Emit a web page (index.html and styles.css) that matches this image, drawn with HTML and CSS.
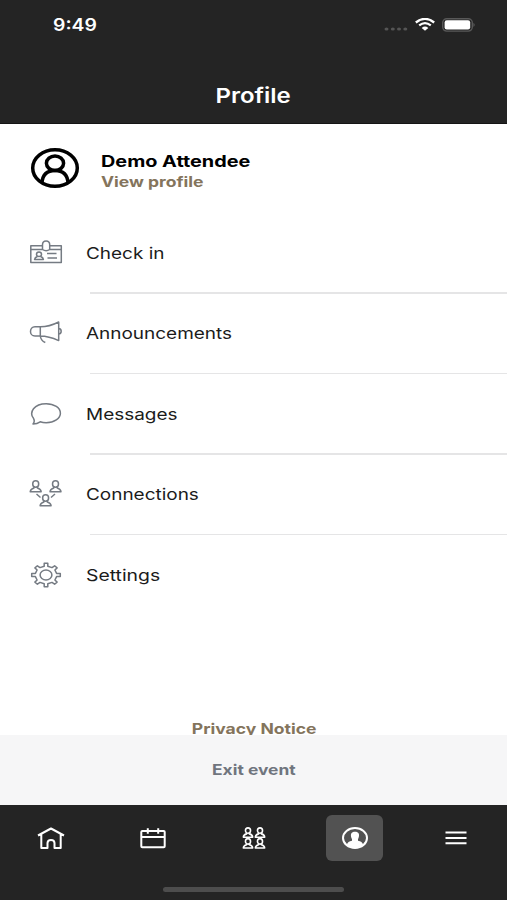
FILE: index.html
```html
<!DOCTYPE html>
<html lang="en">
<head>
<meta charset="utf-8">
<title>Profile</title>
<link rel="stylesheet" href="styles.css">
</head>
<body>
<svg width="0" height="0" class="defs" aria-hidden="true">
  <symbol id="person" viewBox="0 0 14 13" overflow="visible">
    <ellipse cx="7" cy="4" rx="3" ry="3.2"/>
    <path d="M5.3 6.700v1.200C2.800 8.500 1.700 9.200 1.500 11.800h11C12.300 9.200 11.200 8.500 8.700 7.900V6.700"/>
  </symbol>
</svg>
<div class="app">
  <header class="header">
    <div class="status">
      <span class="wide time">9:49</span>
      <div class="signals">
        <svg class="dots" width="24" height="4" viewBox="0 0 24 4"><g fill="#555"><ellipse cx="2.500" cy="2" rx="2" ry="1.600"/><ellipse cx="8.800" cy="2" rx="2" ry="1.600"/><ellipse cx="15" cy="2" rx="2" ry="1.600"/><ellipse cx="21.300" cy="2" rx="2" ry="1.600"/></g></svg>
        <svg class="wifi" width="20" height="13" viewBox="0 0 20 13" fill="none" stroke="#fff"><path d="M.8 4.500Q10-2.700 19.200 4.500" stroke-width="2.300"/><path d="M4.200 7.400Q10 2.900 15.800 7.400" stroke-width="2.200"/><path d="M6.700 9.900Q10 7 13.300 9.900L10 12.700z" fill="#fff" stroke="none"/></svg>
        <svg class="battery" width="34" height="14" viewBox="0 0 34 14"><rect x=".7" y=".7" width="29.600" height="12.400" rx="4" fill="none" stroke="#585858" stroke-width="1.400"/><rect x="2.600" y="2.300" width="25.600" height="9.200" rx="2.200" fill="#fff"/><path d="M31.500 4.800q2.200 2.100 0 4.200z" fill="#626262"/></svg>
      </div>
    </div>
    <h1><span class="wide title">Profile</span></h1>
  </header>

  <main class="content">
    <section class="user">
      <svg class="avatar" width="50" height="42" viewBox="0 0 50 42" fill="none" stroke="#000" stroke-width="3.500"><ellipse cx="25" cy="21" rx="22.300" ry="18.300"/><ellipse cx="25" cy="16.200" rx="8.600" ry="7.200"/><path d="M12 36c.5-8 5-12.500 13-12.500S37.500 28 38 36"/></svg>
      <div class="user-text">
        <span class="wide name">Demo Attendee</span>
        <span class="wide view">View profile</span>
      </div>
    </section>

    <nav class="menu">
      <a class="row"><svg class="icon" width="34" height="28" viewBox="0 0 34 28"><path d="M13.500 6.700H1.800v16.800h30.500V6.700H20.700M1.800 10.400h11.700M20.700 10.400h11.600"/><path d="M13.500 10.500V5.800c0-5 7.200-5 7.200 0v4.700q-3.600 2.400-7.200 0z"/><ellipse cx="10" cy="15.300" rx="2.500" ry="2.300"/><path d="M8.500 17.500c-2 .6-2.700 1.200-2.900 2.900h8.800c-.2-1.700-.9-2.300-2.900-2.900M18 14.600h9.500M18.500 18.900h9.500"/></svg><span class="wide label checkin">Check in</span></a>
      <a class="row"><svg class="icon" width="34" height="28" viewBox="0 0 34 28"><path d="M11.300 7.800H6C0 7.800 0 17 6 17h5.300zM11.300 7.800C18 7.800 24 5.900 29.700 3v18.600C24 19 18 17 11.300 17M29.700 9.400c3.300.3 3.300 5.200 0 5.600M11.300 17c.3 3 1.800 5.200 5 6.500"/></svg><span class="wide label announcements">Announcements</span></a>
      <a class="row"><svg class="icon" width="34" height="28" viewBox="0 0 34 28"><path d="M4.500 18.300C-.2 12.500 5 3.700 17.200 3.700c8 0 14.200 4.200 14.200 9.500s-6.200 9.500-14.200 9.500c-2.500 0-4.500-.4-6-.9-2.200 1.500-4.400 2.100-7.200 2.200 1.600-1.800 1.800-3.300.5-5.700z"/></svg><span class="wide label messages">Messages</span></a>
      <a class="row"><svg class="icon" width="34" height="28" viewBox="0 0 34 28"><use href="#person" x="-.3" y="0" width="14" height="13"/><use href="#person" x="19.500" y="0" width="14" height="13"/><use href="#person" x="9.600" y="14" width="14" height="13"/><path d="M7.500 14l4 3.500M26 14l-4 3.500"/></svg><span class="wide label connections">Connections</span></a>
      <a class="row"><svg class="icon" width="34" height="28" viewBox="0 0 34 28"><ellipse cx="17" cy="14" rx="5.900" ry="5"/><path d="M15.200 2.300h3.600v2.900l4.200 1.400 2.600-1.800 2.500 2.100-2.200 2.100 1.700 3.400h3.700v3.200h-3.700l-1.700 3.400 2.200 2.100-2.500 2.100-2.600-1.800-4.200 1.400v2.900h-3.600v-2.900L11 21.400l-2.600 1.800-2.500-2.100L8.100 19l-1.700-3.400H2.700v-3.200h3.700L8.100 9 5.900 6.900l2.500-2.100L11 6.600l4.200-1.400z"/></svg><span class="wide label settings">Settings</span></a>
    </nav>
    <div class="privacy"><span class="wide privacy-text">Privacy Notice</span></div>
  </main>

  <div class="exit"><span class="wide exit-text">Exit event</span></div>

  <footer class="tabs">
    <div class="tab-row">
      <a class="tab"><svg width="30" height="24" viewBox="0 0 30 24"><path d="M2 9.500L15 2.500l13 7M5.300 8.500v13.600h6.200v-5c0-4.300 7-4.300 7 0v5h6.200V8.500"/></svg></a>
      <a class="tab calendar"><svg width="30" height="24" viewBox="0 0 30 24"><rect x="3.300" y="5" width="23.400" height="16.300" rx="1"/><path d="M3.300 11h23.400M9.800 2.200v5.500M20.200 2.200v5.500"/></svg></a>
      <a class="tab people"><svg width="30" height="24" viewBox="0 0 30 24"><use href="#person" x="2.500" y="1.200" width="13" height="11"/><use href="#person" x="14.500" y="1.200" width="13" height="11"/><use href="#person" x="2.500" y="12" width="13" height="11"/><use href="#person" x="14.500" y="12" width="13" height="11"/></svg></a>
      <a class="tab active"><svg width="30" height="24" viewBox="0 0 30 24"><ellipse cx="15" cy="12" rx="12" ry="10"/><path d="M6.800 18.500c.7-2.200 2.300-3 5.200-3.800v-1.500c-2.400-5-.5-7.400 3-7.400s5.400 2.400 3 7.400v1.500c2.900.8 4.500 1.600 5.200 3.800-4.500 4-12 4-16.400 0z" fill="#fff" stroke="none"/></svg></a>
      <a class="tab"><svg width="30" height="24" viewBox="0 0 30 24"><path d="M4.500 6.500h21M4.500 11.900h21M4.500 17.300h21"/></svg></a>
    </div>
    <div class="home-bar"></div>
  </footer>
</div>
</body>
</html>
```

FILE: styles.css
```css
* { box-sizing: border-box; }
body { margin: 0; font-family: Inter, "Liberation Sans", sans-serif; background: #fff; }
.defs { display: block; position: absolute; }
.app { width: 507px; height: 900px; display: flex; flex-direction: column; overflow: hidden; }

/* Glyphs are stretched horizontally */
.wide { display: inline-block; white-space: nowrap; transform: scaleX(1.2); transform-origin: left center; }

.header { height: 124px; background: #242424; color: #fff; border-bottom: 1px solid #151515; flex: none; }
.status { height: 49px; padding: 0 31px 0 53px; display: flex; align-items: center; justify-content: space-between; }
.time { font-size: 17px; font-weight: 600; line-height: 20px; transform: scaleX(1.14); }
.signals { display: flex; align-items: center; }
.dots { margin: 8px 7px 0 0; }
.wifi { margin-right: 7px; }
h1 { margin: 0; height: 94px; line-height: 94px; text-align: center; font-size: 20.500px; font-weight: 600; }
.title { transform: scaleX(1.17); transform-origin: center; }

.content { height: 611px; flex: none; overflow: hidden; }
.user { height: 88.400px; padding-left: 30px; display: flex; align-items: center; }
.avatar { margin-right: 20.500px; }
.user-text { display: flex; flex-direction: column; align-items: flex-start; padding-top: 6px; }
.name { font-size: 16px; font-weight: 700; line-height: 20px; color: #000; transform: scaleX(1.24); }
.view { font-size: 14px; font-weight: 700; line-height: 21px; color: #84745c; transform: scaleX(1.25); }

.row { height: 80.500px; display: grid; grid-template-columns: 57.200px 1fr; align-items: center; margin-left: 29px; position: relative; }
.row:not(:last-child)::after { content: ""; position: absolute; left: 60.500px; right: 0; bottom: -1px; height: 1.500px; background: #e5e5e6; }
.icon { fill: none; stroke: #757b83; stroke-width: 1.500; stroke-linejoin: round; }
.label { font-size: 16px; line-height: 24px; color: #1b1b1b; justify-self: start; transform: scaleX(1.185); }
.settings { transform: scaleX(1.21); }

.privacy { margin-top: 104px; text-align: center; font-size: 14.500px; line-height: 20px; font-weight: 700; color: #84745c; }
.privacy-text, .exit-text { transform-origin: center; }
.privacy-text { transform: translateX(.6px) scaleX(1.21); }
.exit { height: 70px; flex: none; background: #f6f6f7; text-align: center; line-height: 70px; font-size: 14.500px; font-weight: 700; color: #70757e; }

.tabs { flex: 1; background: #242424; display: flex; flex-direction: column; align-items: center; }
.tab-row { width: 507px; padding-top: 10px; display: grid; grid-template-columns: repeat(5, 101.400px); justify-items: center; }
.tab { width: 57px; height: 46px; border-radius: 6px; display: flex; align-items: center; justify-content: center; }
.tab svg { fill: none; stroke: #fff; stroke-width: 2; stroke-linejoin: round; }
.calendar svg, .people svg { margin-left: 2px; }
.people svg { stroke-width: 1.900; }
.active { background: #525252; }
.home-bar { margin-top: 26px; width: 181px; height: 5px; border-radius: 3px; background: #4d4d4d; }
```
